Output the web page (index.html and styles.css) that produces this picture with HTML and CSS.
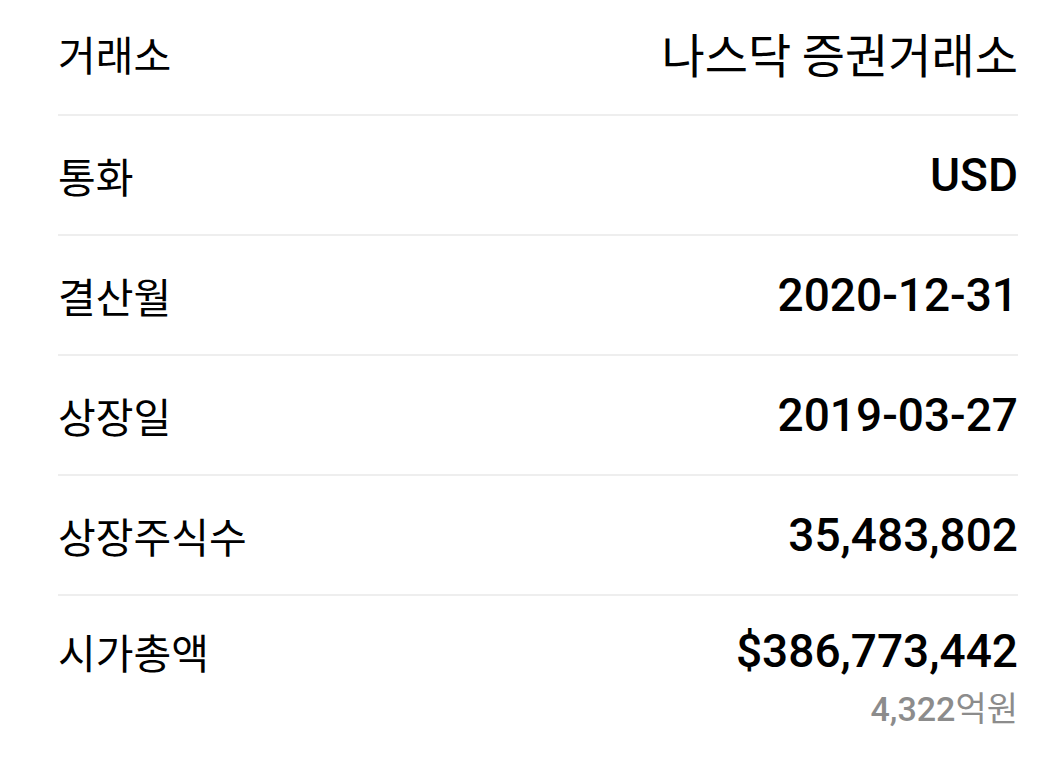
FILE: index.html
```html
<!DOCTYPE html>
<html>
<head>
  <title>종목 정보</title>
  <link rel="stylesheet" href="styles.css">
</head>
<body>
  <div class="info-list">
    <div class="info-row first">
      <div class="label">거래소</div>
      <div class="value kr">나스닥 증권거래소</div>
    </div>
    <div class="info-row">
      <div class="label">통화</div>
      <div class="value">USD</div>
    </div>
    <div class="info-row">
      <div class="label">결산월</div>
      <div class="value">2020-12-31</div>
    </div>
    <div class="info-row">
      <div class="label">상장일</div>
      <div class="value">2019-03-27</div>
    </div>
    <div class="info-row">
      <div class="label">상장주식수</div>
      <div class="value">35,483,802</div>
    </div>
    <div class="info-row last">
      <div class="label">시가총액</div>
      <div class="value-group">
        <div class="value">$386,773,442</div>
        <div class="sub-value">4,322<span class="unit">억원</span></div>
      </div>
    </div>
  </div>
</body>
</html>
```

FILE: styles.css
```css
body {
  margin: 0;
  background: #fff;
  font-family: "Noto Sans CJK KR", "Roboto", sans-serif;
  color: #000;
}

.info-list {
  margin: 0 38px 0 58px;
}

.info-row {
  display: flex;
  align-items: center;
  justify-content: space-between;
  height: 118px;
  border-bottom: 2px solid #eeeeee;
}

.info-row.first {
  height: 106px;
  padding-bottom: 8px;
}

.info-row.last {
  align-items: flex-start;
  height: auto;
  border-bottom: none;
  padding-top: 30px;
}

.label {
  font-size: 41px;
  line-height: 50px;
  font-weight: 400;
}

.value {
  font-family: "Roboto", "Noto Sans CJK KR", sans-serif;
  font-size: 46px;
  line-height: 50px;
  font-weight: 500;
  text-align: right;
}

.value.kr {
  font-family: "Noto Sans CJK KR", sans-serif;
  font-size: 47px;
  font-weight: 400;
}

.value-group {
  display: flex;
  flex-direction: column;
  align-items: flex-end;
}

.sub-value {
  margin-top: 8px;
  font-family: "Roboto", "Noto Sans CJK KR", sans-serif;
  font-size: 34px;
  line-height: 46px;
  font-weight: 500;
  color: #8c8c8c;
}

.sub-value .unit {
  font-family: "Noto Sans CJK KR", sans-serif;
  font-weight: 400;
}
```
